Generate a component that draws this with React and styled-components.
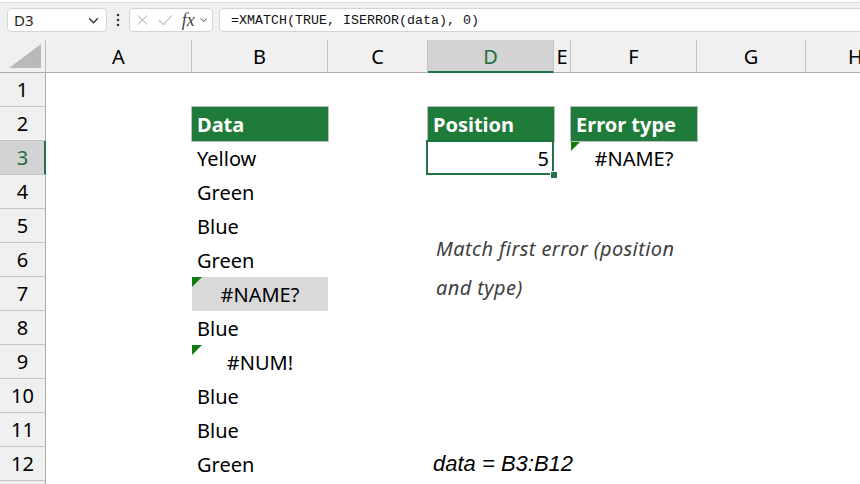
import React from 'react';
import styled, { createGlobalStyle } from 'styled-components';

const GlobalStyle = createGlobalStyle`
  html, body {
    margin: 0;
    padding: 0;
    background: #ffffff;
    overflow: hidden;
  }
  body {
    font-family: "Noto Sans", "Liberation Sans", sans-serif;
    color: #000;
  }
`;

const Page = styled.div`
  width: 860px;
  height: 484px;
  display: flex;
  flex-direction: column;
  overflow: hidden;
`;

const Toolbar = styled.div`
  height: 40px;
  flex: none;
  display: flex;
  align-items: flex-start;
  padding: 8px 0 0 7px;
  box-sizing: border-box;
  background: #f0f0f0;
  box-shadow: inset 0 2px 0 #fafafa, inset 0 3px 0 #dedede;
`;

const Box = styled.div`
  height: 24px;
  box-sizing: border-box;
  background: #fff;
  border: 1px solid #d4d4d4;
  border-radius: 4px;
  display: flex;
  align-items: center;
`;

const NameBox = styled(Box)`
  width: 100px;
  padding: 0 6px 0 6px;
  justify-content: space-between;
  font-family: "Noto Sans", sans-serif;
  font-size: 15px;
  color: #222;
`;

const Dots = styled.div`
  width: 22px;
  height: 24px;
  display: flex;
  align-items: center;
  justify-content: center;
`;

const FxBox = styled(Box)`
  width: 84px;
  padding: 0 4px 0 6px;
  gap: 4px;
`;

const FxLabel = styled.span`
  font-family: "Liberation Serif", serif;
  font-style: italic;
  font-size: 18px;
  color: #444;
  line-height: 1;
  margin-left: 4px;
`;

const FormulaBox = styled(Box)`
  flex: 1;
  margin-left: 6px;
  margin-right: -6px;
  padding-left: 11px;
  font-family: "Liberation Mono", monospace;
  font-size: 13.33px;
  color: #111;
  white-space: pre;
`;

const Sheet = styled.div`
  position: relative;
  flex: 1;
  display: grid;
  grid-template-columns: 46px 146px 136px 100px 126px 17px 126px 109px 100px;
  grid-template-rows: 33px repeat(13, 34px);
  background: #fff;
  overflow: hidden;
`;

const Corner = styled.div`
  background: #f0f0f0;
  border-right: 1px solid #bdbdbd;
  border-bottom: 1px solid #ababab;
  display: flex;
  align-items: flex-end;
  justify-content: flex-end;
  padding: 0 4px 4px 0;
`;

const ColHead = styled.div`
  background: ${p => (p.active ? '#d3d3d3' : '#f0f0f0')};
  border-right: 1px solid #c4c4c4;
  border-bottom: ${p => (p.active ? '2px solid #217346' : '1px solid #ababab')};
  display: flex;
  align-items: center;
  justify-content: center;
  font-size: 20px;
  color: ${p => (p.active ? '#1e6e3f' : '#000')};
  padding-top: ${p => (p.active ? '1px' : '0')};
`;

const RowHead = styled.div`
  background: ${p => (p.active ? '#d3d3d3' : '#f0f0f0')};
  border-bottom: 1px solid #c4c4c4;
  border-right: ${p => (p.active ? '2px solid #217346' : '1px solid #ababab')};
  display: flex;
  align-items: center;
  justify-content: center;
  font-size: 20px;
  color: ${p => (p.active ? '#1e6e3f' : '#000')};
  padding-left: ${p => (p.active ? '1px' : '0')};
`;

const Cell = styled.div`
  position: relative;
  display: flex;
  align-items: center;
  padding: 0 5px;
  min-width: 0;
  white-space: nowrap;
  font-size: 20px;
  justify-content: ${p =>
    p.align === 'center' ? 'center' : p.align === 'right' ? 'flex-end' : 'flex-start'};
  background: ${p => (p.head ? '#1e7b39' : p.shade ? '#d9d9d9' : 'transparent')};
  color: ${p => (p.head ? '#fff' : '#000')};
  font-weight: ${p => (p.head ? 700 : 400)};
  box-shadow: ${p => (p.head ? '0 0 0 1px #bcbcbc' : 'none')};
  z-index: ${p => (p.head || p.selected ? 1 : 0)};
  overflow: visible;

  ${p =>
    p.error &&
    `
    &::before {
      content: '';
      position: absolute;
      left: 0;
      top: 0;
      border-top: 10px solid #107c10;
      border-right: 10px solid transparent;
    }
  `}

  ${p =>
    p.selected &&
    `
    &::after {
      content: '';
      position: absolute;
      inset: -1px 0 0 -2px;
      border: 2px solid #217346;
      pointer-events: none;
    }
  `}
`;

const Handle = styled.span`
  position: absolute;
  right: -3px;
  bottom: -3px;
  width: 6px;
  height: 6px;
  background: #217346;
  border: 1px solid #fff;
  box-sizing: content-box;
  transform: translate(1px, 1px);
  z-index: 2;
`;

const Range = styled.span`
  font-family: "Liberation Sans", sans-serif;
  font-style: italic;
  font-size: 22px;
`;

const Note = styled.div`
  position: absolute;
  left: 436px;
  top: 189px;
  font-family: "Noto Sans", sans-serif;
  font-style: italic;
  font-size: 20px;
  letter-spacing: 0.4px;
  line-height: 39px;
  color: #404040;
  z-index: 3;
`;

const Chevron = ({ size = 12, color = '#333' }) => (
  <svg width={size} height={size} viewBox="0 0 12 12">
    <polyline points="2,4 6,8 10,4" fill="none" stroke={color} strokeWidth="1.3" />
  </svg>
);

const cols = ['A', 'B', 'C', 'D', 'E', 'F', 'G', 'H'];

const rows = {
  2: { B: { text: 'Data', head: true }, D: { text: 'Position', head: true }, F: { text: 'Error type', head: true } },
  3: {
    B: { text: 'Yellow' },
    D: { text: '5', align: 'right', selected: true },
    F: { text: '#NAME?', align: 'center', error: true },
  },
  4: { B: { text: 'Green' } },
  5: { B: { text: 'Blue' } },
  6: { B: { text: 'Green' } },
  7: { B: { text: '#NAME?', align: 'center', error: true, shade: true } },
  8: { B: { text: 'Blue' } },
  9: { B: { text: '#NUM!', align: 'center', error: true } },
  10: { B: { text: 'Blue' } },
  11: { B: { text: 'Blue' } },
  12: { B: { text: 'Green' }, D: { range: 'data = B3:B12' } },
};

const App = () => {
  const rowNums = Array.from({ length: 13 }, (_, i) => i + 1);

  return (
    <Page>
      <GlobalStyle />
      <Toolbar>
        <NameBox>
          <span>D3</span>
          <Chevron size={13} color="#333" />
        </NameBox>
        <Dots>
          <svg width="4" height="14" viewBox="0 0 4 14">
            <circle cx="2" cy="2" r="1.3" fill="#333" />
            <circle cx="2" cy="7" r="1.3" fill="#333" />
            <circle cx="2" cy="12" r="1.3" fill="#333" />
          </svg>
        </Dots>
        <FxBox>
          <svg width="14" height="14" viewBox="0 0 14 14">
            <path d="M2 2 L12 12 M12 2 L2 12" stroke="#c2c2c2" strokeWidth="1.2" />
          </svg>
          <svg width="18" height="14" viewBox="0 0 18 14" style={{ marginLeft: 4 }}>
            <polyline points="2,7 7,12 16,2" fill="none" stroke="#c2c2c2" strokeWidth="1.2" />
          </svg>
          <FxLabel>fx</FxLabel>
          <Chevron size={10} color="#777" />
        </FxBox>
        <FormulaBox>=XMATCH(TRUE, ISERROR(data), 0)</FormulaBox>
      </Toolbar>

      <Sheet>
        <Corner>
          <svg width="32" height="24" viewBox="0 0 32 24">
            <polygon points="32,0 32,24 0,24" fill="#b9b9b9" />
          </svg>
        </Corner>
        {cols.map(c => (
          <ColHead key={c} active={c === 'D'}>
            {c}
          </ColHead>
        ))}

        {rowNums.map(r => (
          <React.Fragment key={r}>
            {/* row 13 is only a sliver at the bottom edge, its number is not visible */}
            <RowHead active={r === 3}>{r < 13 ? r : null}</RowHead>
            {cols.map(c => {
              const cell = (rows[r] || {})[c];
              if (!cell) return <Cell key={c} />;
              return (
                <Cell
                  key={c}
                  head={cell.head}
                  align={cell.align}
                  error={cell.error}
                  shade={cell.shade}
                  selected={cell.selected}
                >
                  {cell.range ? <Range>{cell.range}</Range> : cell.text}
                  {cell.selected && <Handle />}
                </Cell>
              );
            })}
          </React.Fragment>
        ))}

        <Note>
          Match first error (position
          <br />
          and type)
        </Note>
      </Sheet>
    </Page>
  );
};

export default App;
